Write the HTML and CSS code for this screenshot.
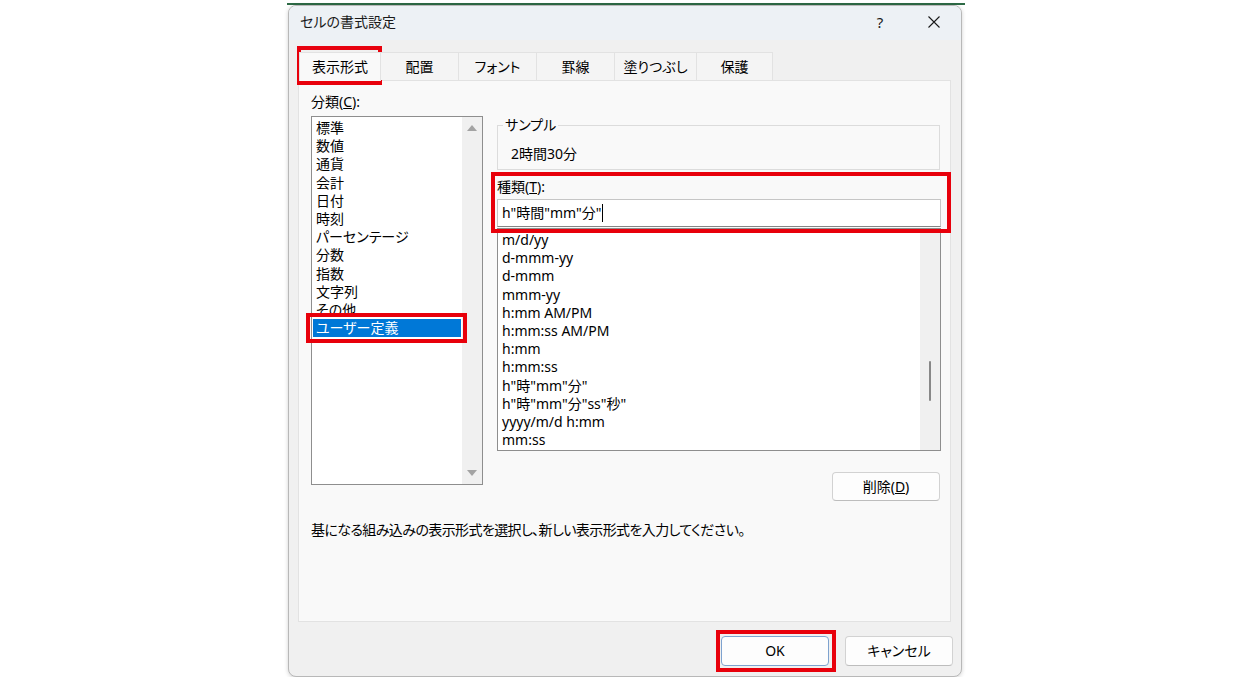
FILE: index.html
```html
<!DOCTYPE html>
<html lang="ja">
<head>
<meta charset="utf-8">
<title>セルの書式設定</title>
<link rel="stylesheet" href="styles.css">
</head>
<body>
<div class="edge"></div>
<div class="dialog">
  <div class="titlebar">
    <span class="title">セルの書式設定</span>
    <div class="tb-btns">
      <span class="tb-btn help">?</span>
      <span class="tb-btn close"><svg width="12" height="12" viewBox="0 0 12 12"><path d="M0.5 0.5 L11.5 11.5 M11.5 0.5 L0.5 11.5" stroke="#1a1a1a" stroke-width="1.1" fill="none"/></svg></span>
    </div>
  </div>
  <div class="tabs">
    <div class="tab active w1">表示形式</div>
    <div class="tab w2">配置</div>
    <div class="tab w3">フォント</div>
    <div class="tab w4">罫線</div>
    <div class="tab w5">塗りつぶし</div>
    <div class="tab w6">保護</div>
  </div>
  <div class="panel">
    <div class="main">
      <div class="left">
        <div class="label">分類(<u>C</u>):</div>
        <div class="listbox cat">
          <ul class="items">
            <li>標準</li>
            <li>数値</li>
            <li>通貨</li>
            <li>会計</li>
            <li>日付</li>
            <li>時刻</li>
            <li>パーセンテージ</li>
            <li>分数</li>
            <li>指数</li>
            <li>文字列</li>
            <li>その他</li>
            <li class="sel">ユーザー定義</li>
          </ul>
          <div class="vscroll">
            <span class="arrow up"></span>
            <span class="arrow down"></span>
          </div>
        </div>
      </div>
      <div class="right">
        <fieldset class="sample">
          <legend>サンプル</legend>
          <div class="sample-val">2時間30分</div>
        </fieldset>
        <div class="label kind">種類(<u>T</u>):</div>
        <div class="input">h"時間"mm"分"<span class="caret"></span></div>
        <div class="listbox fmt">
          <ul class="items">
            <li>m/d/yy</li>
            <li>d-mmm-yy</li>
            <li>d-mmm</li>
            <li>mmm-yy</li>
            <li>h:mm AM/PM</li>
            <li>h:mm:ss AM/PM</li>
            <li>h:mm</li>
            <li>h:mm:ss</li>
            <li>h"時"mm"分"</li>
            <li>h"時"mm"分"ss"秒"</li>
            <li>yyyy/m/d h:mm</li>
            <li>mm:ss</li>
          </ul>
          <div class="vscroll thin"><span class="thumb"></span></div>
        </div>
        <div class="btn-row"><button class="btn">削除(<u>D</u>)</button></div>
      </div>
    </div>
    <p class="desc">基になる組み込みの表示形式を選択し、新しい表示形式を入力してください。</p>
  </div>
  <div class="footer">
    <button class="btn ok">OK</button>
    <button class="btn">キャンセル</button>
  </div>
</div>
<div class="mark m-tab"></div>
<div class="mark m-cat"></div>
<div class="mark m-kind"></div>
<div class="mark m-ok"></div>
</body>
</html>
```
FILE: styles.css
```css
body {
  margin: 0;
  background: #ffffff;
  font-family: "Noto Sans", "Noto Sans CJK JP", sans-serif;
  font-size: 14px;
  color: #000;
  font-feature-settings: "palt";
}

.edge {
  margin-left: 287px;
  padding-top: 3px;
  width: 678px;
  height: 2px;
  background: #2d6a45;
  background-clip: content-box;
}

.dialog {
  margin-left: 288px;
  width: 674px;
  height: 672px;
  box-sizing: border-box;
  border: 1px solid #b8b8b8;
  border-radius: 8px;
  background: #f0f0f0;
  display: flex;
  flex-direction: column;
  overflow: hidden;
  box-shadow: 0 1px 4px rgba(0, 0, 0, 0.18);
}

.titlebar {
  height: 34px;
  flex: none;
  box-sizing: border-box;
  padding: 0 0 2px 11px;
  background: #edf1f5;
  display: flex;
  align-items: center;
  justify-content: space-between;
}
.title { line-height: 18px; color: #1a1a1a; }
.tb-btns { display: flex; gap: 8px; padding-right: 4px; }
.tb-btn {
  width: 46px;
  height: 30px;
  display: flex;
  align-items: center;
  justify-content: center;
  color: #1a1a1a;
}
.help { font-size: 15px; }

.tabs {
  display: flex;
  margin: 12px 0 0 10px;
  height: 28px;
  flex: none;
  position: relative;
  z-index: 1;
}
.tab {
  box-sizing: border-box;
  height: 28px;
  border: 1px solid #e2e2e2;
  border-bottom: none;
  background: #f4f4f4;
  text-align: center;
  line-height: 27px;
  margin-left: -1px;
}
.tab.active {
  margin-left: 0;
  height: 29px;
  background: #f9f9f9;
}
.w1 { width: 82px; }
.w2 { width: 79px; }
.w3 { width: 79px; }
.w4 { width: 79px; }
.w5 { width: 83px; }
.w6 { width: 77px; }

.panel {
  flex: none;
  margin-left: 9px;
  width: 653px;
  height: 542px;
  box-sizing: border-box;
  border: 1px solid #e2e2e2;
  background: #f9f9f9;
  padding: 12px 9px 0 12px;
}

.main { display: flex; gap: 14px; }
.left { width: 172px; }
.label { line-height: 18px; }

.listbox {
  box-sizing: border-box;
  border: 1px solid #8e8e8e;
  background: #fff;
  display: flex;
}
.cat { margin-top: 5px; height: 369px; }

.items {
  list-style: none;
  margin: 0;
  padding: 2px 1px 0 1px;
  flex: 1;
  line-height: 18.2px;
  overflow: hidden;
}
.items li { padding-left: 3px; white-space: nowrap; }
.items li.sel { background: #0078d7; color: #fff; }

.vscroll {
  width: 20px;
  flex: none;
  background: #f0f0f0;
  display: flex;
  flex-direction: column;
  align-items: center;
  justify-content: space-between;
  padding: 8px 0;
  box-sizing: border-box;
}
.arrow {
  width: 0;
  height: 0;
  border-left: 5px solid transparent;
  border-right: 5px solid transparent;
}
.arrow.up { border-bottom: 6px solid #a3a3a3; }
.arrow.down { border-top: 6px solid #a3a3a3; }

.vscroll.thin {
  justify-content: flex-start;
  padding: 132px 0 0 0;
}
.thumb {
  width: 2px;
  height: 40px;
  border-radius: 1px;
  background: #888;
  margin-left: -1px;
}

.right { width: 444px; display: flex; flex-direction: column; }
.sample {
  margin: 23px 0 0 0;
  padding: 0;
  width: 443px;
  height: 54px;
  box-sizing: border-box;
  border: 1px solid #dcdcdc;
  min-width: 0;
}
.sample legend {
  padding: 0 2px;
  margin-left: 5px;
  line-height: 18px;
}
.sample-val { margin-top: 11px; padding-left: 13px; line-height: 18px; }
.kind { margin-top: 8px; }

.input {
  margin-top: 3px;
  height: 28px;
  box-sizing: border-box;
  border: 1px solid #c6c6c6;
  border-bottom-color: #858585;
  background: #fff;
  padding-left: 4px;
  line-height: 26px;
  white-space: nowrap;
}
.caret {
  display: inline-block;
  width: 1px;
  height: 18px;
  background: #000;
  vertical-align: -4px;
  margin-left: 1px;
}

.fmt { margin-top: 1px; height: 223px; }

.btn-row { display: flex; justify-content: flex-end; margin-top: 21px; padding-right: 1px; }

.btn {
  width: 108px;
  height: 30px;
  box-sizing: border-box;
  border: 1px solid #d2d2d2;
  border-bottom-color: #bdbdbd;
  border-radius: 4px;
  background: #fdfdfd;
  font: inherit;
  color: #000;
  padding: 0;
  line-height: 28px;
}
.btn-row .btn { height: 29px; line-height: 27px; }
.btn.ok { border-color: #7ea3cf; }

.desc { margin: 20px 0 0 0; line-height: 18px; letter-spacing: -0.6px; }

.footer {
  display: flex;
  justify-content: flex-end;
  gap: 16px;
  padding: 14px 8px 0 0;
}

.mark {
  position: absolute;
  box-sizing: border-box;
  border: 4px solid #e8000b;
}
.m-tab { left: 297px; top: 46px; width: 85px; height: 39px; }
.m-cat { left: 306px; top: 313px; width: 161px; height: 30px; }
.m-kind { left: 491px; top: 172px; width: 460px; height: 61px; }
.m-ok { left: 716px; top: 630px; width: 120px; height: 42px; }
```
